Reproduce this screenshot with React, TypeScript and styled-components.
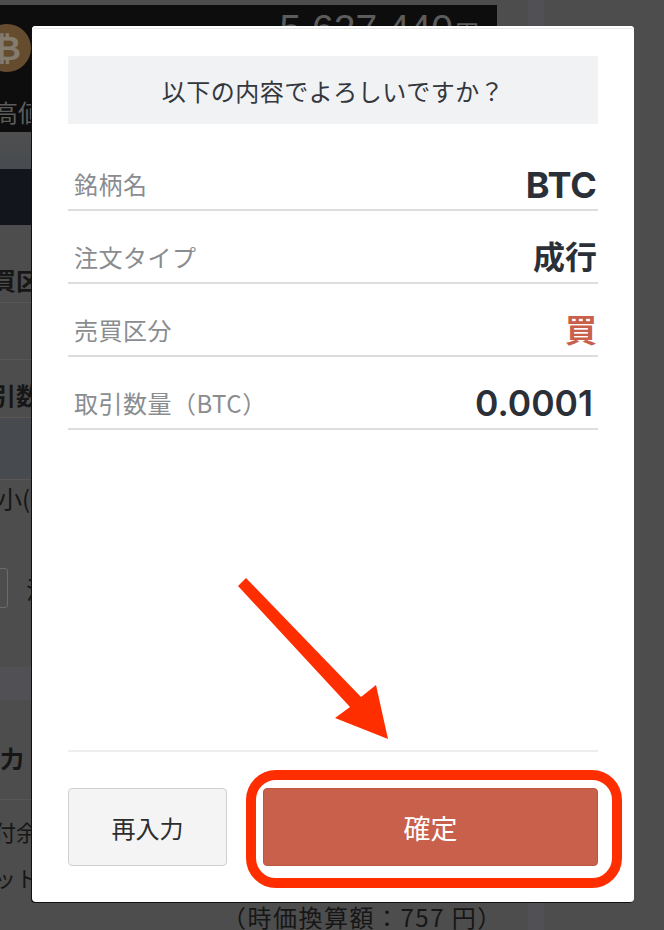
import { createGlobalStyle } from "styled-components";
import styled from "styled-components";

const FONT = `"Noto Sans CJK JP", "Noto Sans", sans-serif`;

const GlobalStyle = createGlobalStyle`
  html, body {
    margin: 0;
    padding: 0;
    background: #4d4d4d;
    font-family: ${FONT};
  }
`;

const rows = [
  { label: "銘柄名", value: "BTC", size: 36, latin: true },
  { label: "注文タイプ", value: "成行", size: 32 },
  { label: "売買区分", value: "買", size: 32, buy: true },
  { label: "取引数量（BTC）", value: "0.0001", size: 35.5, latin: true, inset: true },
];

const App = () => (
  <>
    <GlobalStyle />
    <Page>
      <Backdrop>
        <Ticker>
          <CoinRow>
            <Coin>₿</Coin>
            <Price>5,627,440<PriceUnit>円</PriceUnit></Price>
          </CoinRow>
          <TickerLabel>高値</TickerLabel>
        </Ticker>
        <GreyBand />
        <DarkBand />
        <BackSection $height={78} $pad={40}><BackBold>買区分</BackBold></BackSection>
        <BackSection $height={57} $pad={0} />
        <BackSection $height={58} $pad={20}><BackBold>引数量</BackBold></BackSection>
        <InputBand />
        <SmallNote>小(</SmallNote>
        <CheckRow><CheckBox /><span>注</span></CheckRow>
        <LightBand />
        <BackTitle>力・</BackTitle>
        <BackLine>付余力</BackLine>
        <BackLine>ット</BackLine>
        <Converted>（時価換算額：757 円）</Converted>
      </Backdrop>
      <Gutter />
      <SideStrip />

      <Modal>
        <Question>以下の内容でよろしいですか？</Question>
        <Rows>
          {rows.map(row => (
            <Row key={row.label}>
              <RowLabel>{row.label}</RowLabel>
              <RowValue $size={row.size} $buy={row.buy} $latin={row.latin} $inset={row.inset}>
                {row.value}
              </RowValue>
            </Row>
          ))}
        </Rows>
        <Footer>
          <ReenterButton type="button">再入力</ReenterButton>
          <ConfirmButton type="button">確定</ConfirmButton>
        </Footer>
      </Modal>

      <ArrowMark viewBox="0 0 664 930" aria-hidden="true">
        <path d="M238 586 L246 578 L361 697 L376 685 L388 739 L335 718 L350 707 Z" fill="#ff2e00" />
      </ArrowMark>
      <Ring />
    </Page>
  </>
);

export default App;

const Page = styled.div`
  position: relative;
  width: 664px;
  height: 930px;
  overflow: hidden;
  display: flex;
  background: #4d4d4d;
`;

const Backdrop = styled.div`
  width: 497px;
  flex-shrink: 0;
  padding-top: 5px;
  color: #161616;
`;

const Gutter = styled.div`
  width: 31px;
`;

const SideStrip = styled.div`
  width: 16px;
  background: #515155;
`;

const Ticker = styled.div`
  height: 127px;
  background: #0d0d0d;
  color: #5c5c5c;
`;

const CoinRow = styled.div`
  display: flex;
  justify-content: space-between;
  align-items: flex-start;
  height: 86px;
  padding-right: 18px;
`;

const Coin = styled.div`
  width: 48px;
  height: 48px;
  margin: 19px 0 0 -17px;
  border-radius: 50%;
  background: #664c2e;
  color: #857c70;
  font: 700 34px/48px "Liberation Sans", sans-serif;
  text-align: center;
`;

const Price = styled.div`
  font-family: "Liberation Sans", ${FONT};
  font-size: 39px;
  line-height: 40px;
  margin-top: 4px;
`;

const PriceUnit = styled.span`
  font-size: 24px;
  margin-left: 2px;
`;

const TickerLabel = styled.div`
  font-size: 24px;
  line-height: 32px;
  margin: 5px 0 0 -6px;
`;

const GreyBand = styled.div`
  height: 37px;
  background: linear-gradient(#4f4f4f, #474b4f);
`;

const DarkBand = styled.div`
  height: 56px;
  background: #12161c;
`;

const BackSection = styled.div<{ $height: number; $pad: number }>`
  height: ${props => props.$height}px;
  box-sizing: border-box;
  padding-top: ${props => props.$pad}px;
  border-bottom: 1px solid #5a5656;
`;

const BackBold = styled.div`
  font-size: 24px;
  font-weight: 700;
  line-height: 30px;
  margin-left: -8px;
`;

const InputBand = styled.div`
  height: 62px;
  box-sizing: border-box;
  background: #474b4f;
  border-bottom: 1px solid #5a5656;
`;

const SmallNote = styled.div`
  font-size: 24px;
  line-height: 30px;
  margin: 3px 0 0 -2px;
`;

const CheckRow = styled.div`
  display: flex;
  gap: 18px;
  align-items: center;
  height: 40px;
  margin-top: 55px;
  font-size: 24px;
`;

const CheckBox = styled.div`
  width: 22px;
  height: 40px;
  margin-left: -14px;
  box-sizing: border-box;
  border: 1px solid #6b6b6b;
  border-radius: 3px;
`;

const LightBand = styled.div`
  height: 33px;
  margin-top: 59px;
  background: #515155;
`;

const BackTitle = styled.div`
  height: 57px;
  box-sizing: border-box;
  margin-top: 43px;
  border-bottom: 1px solid #5a5656;
  font-size: 24px;
  font-weight: 700;
  line-height: 30px;
`;

const BackLine = styled.div`
  font-size: 22px;
  line-height: 30px;
  margin: 16px 0 0 -6px;
`;

const Converted = styled.div`
  font-size: 24px;
  line-height: 28px;
  margin: 11px 0 0 222px;
  letter-spacing: 1.5px;
  white-space: nowrap;
  color: #161616;
`;

/* the dialog lies over the dimmed page */
const Modal = styled.div`
  position: absolute;
  left: 32px;
  top: 26px;
  width: 602px;
  height: 876px;
  box-sizing: border-box;
  padding: 30px 36px 36px;
  display: flex;
  flex-direction: column;
  background: #fff;
  border-radius: 4px;
  box-shadow: -1px 1px 0 #111, inset 0 2px 0 #fff, inset 0 3px 0 #e8e8e8;
`;

const Question = styled.div`
  height: 68px;
  line-height: 70px;
  background: #f1f2f4;
  color: #33373d;
  font-size: 24px;
  letter-spacing: 0.5px;
  text-align: center;
`;

const Rows = styled.div`
  flex: 1;
  margin-top: 14px;
`;

const Row = styled.div`
  height: 73px;
  box-sizing: border-box;
  padding-top: 19px;
  display: flex;
  justify-content: space-between;
  align-items: center;
  border-bottom: 2px solid #dcdddf;
`;

const RowLabel = styled.div`
  margin-left: 6px;
  color: #8a8d90;
  font-size: 24px;
  letter-spacing: 0.5px;
`;

const RowValue = styled.div<{ $size: number; $buy?: boolean; $latin?: boolean; $inset?: boolean }>`
  margin-right: ${props => (props.$inset ? 5 : 1)}px;
  margin-top: ${props => (props.$latin ? 3 : 0)}px;
  margin-bottom: ${props => (props.$latin ? 0 : 2)}px;
  font-family: ${props => (props.$latin ? `Inter, ${FONT}` : FONT)};
  font-size: ${props => props.$size}px;
  line-height: 44px;
  font-weight: ${props => (props.$inset ? 600 : 700)};
  color: ${props => (props.$buy ? "#c9604c" : "#2b2f38")};
`;

const Footer = styled.div`
  display: flex;
  gap: 36px;
  padding-top: 36px;
  border-top: 2px solid #eeeeee;
`;

const FooterButton = styled.button`
  height: 78px;
  padding: 0;
  border-radius: 4px;
  font-family: ${FONT};
`;

const ReenterButton = styled(FooterButton)`
  width: 159px;
  background: #f4f4f4;
  border: 1px solid #cfcfcf;
  color: #2d2d2d;
  font-size: 24px;
`;

const ConfirmButton = styled(FooterButton)`
  flex: 1;
  background: #c9604c;
  border: 1px solid #bb5643;
  color: #fff;
  font-size: 27px;
`;

const ArrowMark = styled.svg`
  position: absolute;
  inset: 0;
  width: 664px;
  height: 930px;
  pointer-events: none;
`;

const Ring = styled.div`
  position: absolute;
  left: 246px;
  top: 770px;
  width: 376px;
  height: 118px;
  box-sizing: border-box;
  border: 10px solid #ff2e00;
  border-radius: 30px;
  pointer-events: none;
`;
